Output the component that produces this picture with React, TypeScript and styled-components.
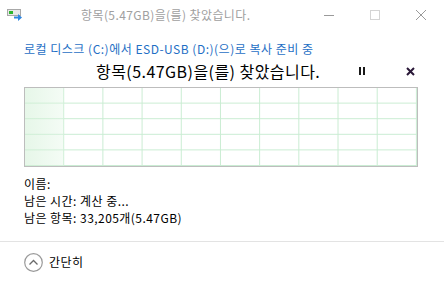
import React from 'react';
import styled, { createGlobalStyle } from 'styled-components';

const GlobalStyle = createGlobalStyle`
  html, body {
    margin: 0;
    padding: 0;
    background: #ffffff;
  }
  body {
    font-family: "Noto Sans CJK KR", "Noto Sans", sans-serif;
    font-size: 12px;
    color: #000000;
  }
`;

const Window = styled.div`
  width: 444px;
  height: 282px;
  display: flex;
  flex-direction: column;
  background: #ffffff;
  overflow: hidden;
`;

const TitleBar = styled.div`
  height: 30px;
  display: flex;
  align-items: center;
  flex-shrink: 0;
`;

const AppIcon = styled.div`
  width: 16px;
  height: 16px;
  margin-left: 7px;
  display: flex;
  align-items: center;
`;

const Title = styled.div`
  flex: 1;
  padding-left: 58px;
  color: #a0a0a0;
  font-size: 12px;
  letter-spacing: 0.4px;
  line-height: 30px;
  white-space: nowrap;
`;

const WinButton = styled.div`
  width: 46px;
  height: 30px;
  display: flex;
  align-items: center;
  justify-content: center;
  color: #9a9a9a;
`;

const Content = styled.div`
  padding: 0 22px 0 24px;
  display: flex;
  flex-direction: column;
`;

const Source = styled.div`
  margin-top: 10px;
  color: #1f6fc5;
  font-size: 12px;
  letter-spacing: 0.5px;
  line-height: 18px;
  white-space: nowrap;
`;

const HeadRow = styled.div`
  display: flex;
  align-items: center;
  height: 26px;
`;

const Heading = styled.div`
  flex: 1;
  padding-left: 72px;
  font-size: 16px;
  letter-spacing: 0.45px;
  line-height: 26px;
  white-space: nowrap;
`;

const ControlButton = styled.div<{ $gap?: number }>`
  width: 24px;
  height: 24px;
  display: flex;
  align-items: center;
  justify-content: center;
  margin-left: ${(p) => p.$gap ?? 0}px;
`;

const Graph = styled.div`
  position: relative;
  margin-top: 3px;
  width: 392px;
  height: 78px;
  border: 1px solid #bdbdbd;
  background-color: #ffffff;
  background-image:
    linear-gradient(to right, transparent calc(100% - 1px), #c9ecd2 calc(100% - 1px)),
    linear-gradient(to bottom, transparent calc(100% - 1px), #c9ecd2 calc(100% - 1px));
  background-size: 10% 20%;
`;

const GraphFill = styled.div`
  position: absolute;
  left: 0;
  top: 0;
  bottom: 0;
  background: linear-gradient(to right, rgba(210, 240, 214, 0.55), rgba(225, 246, 228, 0.35));
`;

const Details = styled.div`
  margin-top: 8px;
  display: flex;
  flex-direction: column;
`;

const DetailLine = styled.div`
  font-size: 12px;
  letter-spacing: 0.45px;
  line-height: 17px;
  white-space: nowrap;
`;

const Footer = styled.div`
  margin-top: auto;
  height: 40px;
  border-top: 1px solid #e3e3e3;
  display: flex;
  align-items: center;
  padding-left: 24px;
  gap: 6px;
`;

const FooterLabel = styled.span`
  font-size: 12px;
  letter-spacing: 0.4px;
  line-height: 20px;
`;

const MoveIcon = () => (
  <svg width="16" height="12" viewBox="0 0 16 12">
    <rect x="0.5" y="0.5" width="13" height="6" fill="#e8e8e8" stroke="#a8a8a8" />
    <rect x="2" y="2" width="4" height="3" fill="#2fb52f" />
    <path d="M7 7.5 H11 V5 L15 8.5 L11 12 V9.5 H7 Z" fill="#2f86e0" />
  </svg>
);

export default function App() {
  const progress = 0.1;
  return (
    <>
      <GlobalStyle />
      <Window>
        <TitleBar>
          <AppIcon>
            <MoveIcon />
          </AppIcon>
          <Title>항목(5.47GB)을(를) 찾았습니다.</Title>
          <WinButton>
            <svg width="10" height="10" viewBox="0 0 10 10">
              <line x1="0" y1="5.5" x2="10" y2="5.5" stroke="currentColor" strokeWidth="1" />
            </svg>
          </WinButton>
          <WinButton>
            <svg width="10" height="10" viewBox="0 0 10 10">
              <rect x="0.5" y="0.5" width="9" height="9" fill="none" stroke="#d4d4d4" strokeWidth="1" />
            </svg>
          </WinButton>
          <WinButton>
            <svg width="10" height="10" viewBox="0 0 10 10">
              <path d="M0 0 L10 10 M10 0 L0 10" stroke="currentColor" strokeWidth="1" />
            </svg>
          </WinButton>
        </TitleBar>
        <Content>
          <Source>로컬 디스크 (C:)에서 ESD-USB (D:)(으)로 복사 준비 중</Source>
          <HeadRow>
            <Heading>항목(5.47GB)을(를) 찾았습니다.</Heading>
            <ControlButton>
              <svg width="8" height="8" viewBox="0 0 8 8">
                <rect x="1" y="0" width="2" height="8" fill="#1a1a1a" />
                <rect x="5" y="0" width="2" height="8" fill="#1a1a1a" />
              </svg>
            </ControlButton>
            <ControlButton $gap={24}>
              <svg width="9" height="9" viewBox="0 0 9 9">
                <path d="M1 1 L8 8 M8 1 L1 8" stroke="#2a1838" strokeWidth="2" />
              </svg>
            </ControlButton>
          </HeadRow>
          <Graph>
            <GraphFill style={{ width: `${progress * 100}%` }} />
          </Graph>
          <Details>
            <DetailLine>이름:</DetailLine>
            <DetailLine>남은 시간: 계산 중...</DetailLine>
            <DetailLine>남은 항목: 33,205개(5.47GB)</DetailLine>
          </Details>
        </Content>
        <Footer>
          <svg width="19" height="19" viewBox="0 0 19 19">
            <circle cx="9.5" cy="9.5" r="8.8" fill="none" stroke="#9a9a9a" strokeWidth="1.2" />
            <path d="M5.5 11.5 L9.5 7.5 L13.5 11.5" fill="none" stroke="#6a6a6a" strokeWidth="1.3" />
          </svg>
          <FooterLabel>간단히</FooterLabel>
        </Footer>
      </Window>
    </>
  );
}
